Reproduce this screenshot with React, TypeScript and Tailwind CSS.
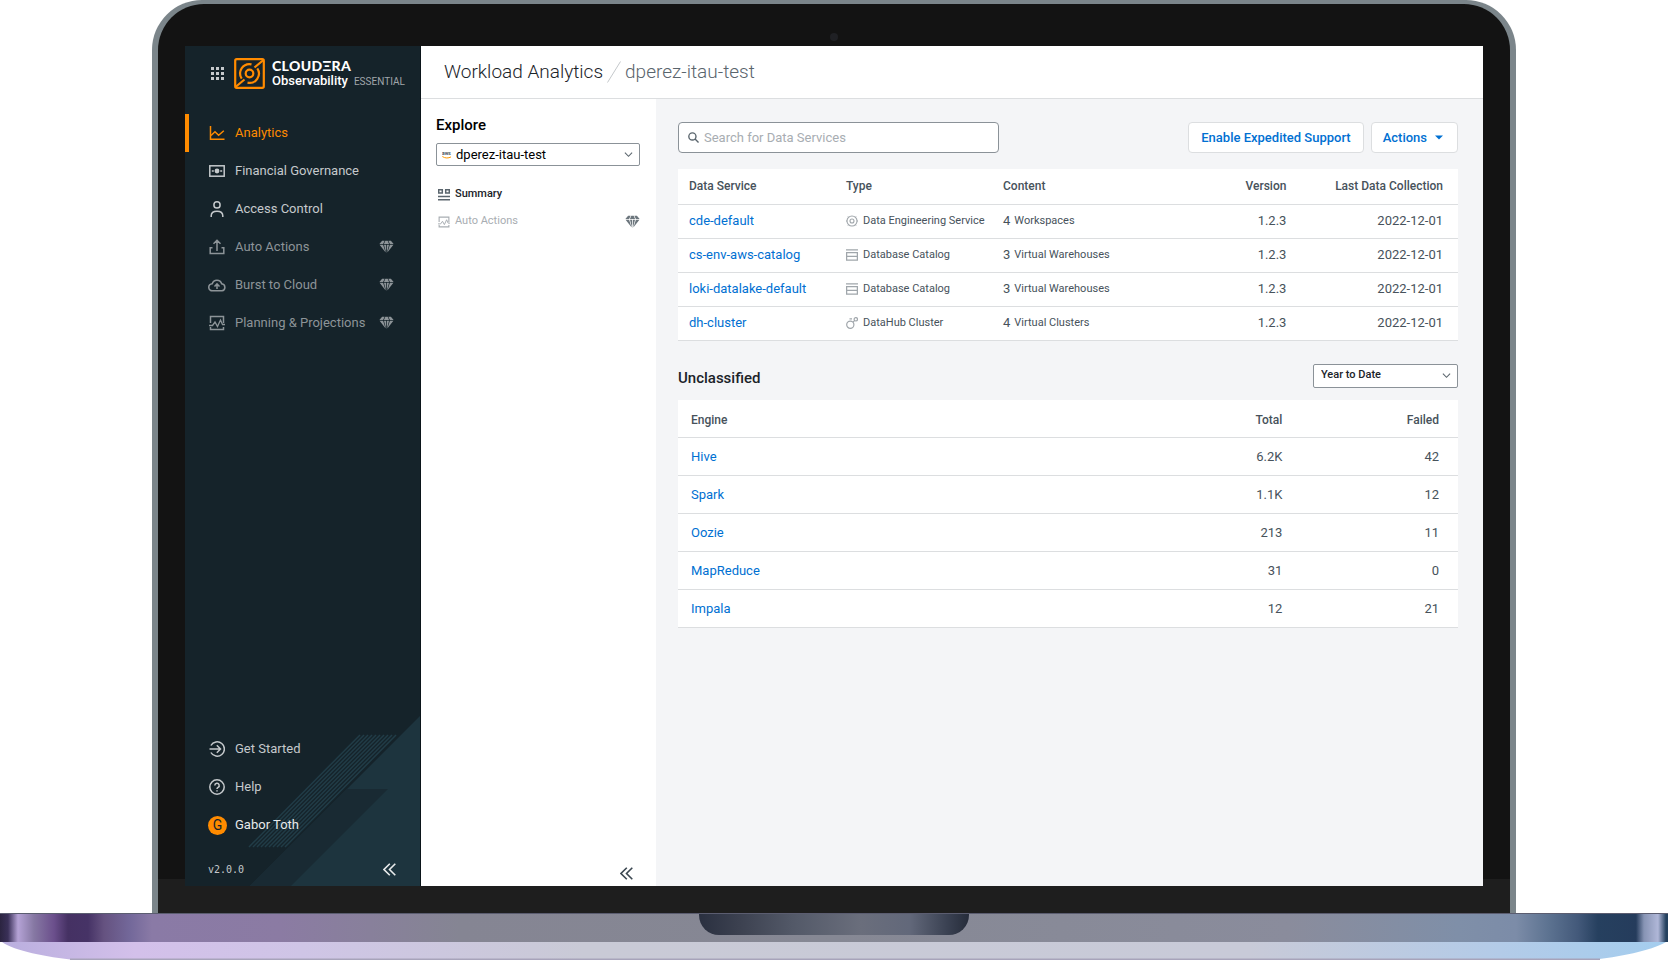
import React, { ReactNode } from 'react'

type IconProps = { className?: string }

const Svg = ({
  className = 'size-4',
  box = 16,
  children,
}: {
  className?: string
  box?: number
  children: ReactNode
}) => (
  <svg
    viewBox={`0 0 ${box} ${box}`}
    fill="none"
    stroke="currentColor"
    strokeWidth="1.5"
    className={`shrink-0 ${className}`}
    aria-hidden="true"
  >
    {children}
  </svg>
)

const GridIcon = () => (
  <Svg box={13} className="size-[13px]">
    {[0, 5, 10].map((y) =>
      [0, 5, 10].map((x) => (
        <rect key={`${x}-${y}`} x={x} y={y} width="3" height="3" fill="currentColor" stroke="none" />
      ))
    )}
  </Svg>
)

const LogoMark = () => (
  <svg
    viewBox="0 0 31 31"
    fill="none"
    stroke="#ff8b00"
    strokeWidth="2.2"
    className="size-[31px] shrink-0"
    aria-hidden="true"
  >
    <rect x="1.2" y="1.2" width="28.6" height="28.6" rx="1.5" />
    <circle cx="15.5" cy="15.5" r="3.8" />
    <path d="M29.5 2 20.500 9.500M1.500 29 10.500 21.500" />
    <path d="M17.500 6.300A9.400 9.400 0 0 0 7.700 20.700" />
    <path d="M13.500 24.700A9.400 9.400 0 0 0 23.300 10.300" />
  </svg>
)

const AnalyticsIcon = () => (
  <Svg>
    <path d="M1.5 1v13.3H15.500" />
    <path d="M2 10.500 6 6.800l3.600 3.400L14.800 5.800" />
  </Svg>
)

const FinanceIcon = () => (
  <Svg>
    <rect x=".8" y="2.800" width="14.400" height="10.400" />
    <circle cx="8" cy="8" r="2.400" fill="currentColor" stroke="none" />
    <path d="M2.800 8h2M11.200 8h2" />
  </Svg>
)

const UserIcon = () => (
  <Svg>
    <circle cx="8" cy="3.900" r="3.100" />
    <path d="M2.200 16v-1.200c0-2.800 2.300-4.600 5.800-4.600s5.800 1.800 5.800 4.600V16" />
  </Svg>
)

const UploadIcon = () => (
  <Svg>
    <path d="M8 12V1.500M4.500 4.800 8 1.300l3.500 3.500M3.500 8.700H1.200v5.800h13.600V8.700h-2.300" />
  </Svg>
)

const CloudIcon = () => (
  <Svg box={20} className="-mx-px size-[18px]">
    <path
      strokeWidth="1.700"
      d="M5 16.500a4 4 0 0 1-.3-8A5.500 5.500 0 0 1 15.200 8.600 4 4 0 0 1 15.500 16.500ZM10 14.500V9M7.200 11.600 10 8.800l2.800 2.800"
    />
  </Svg>
)

const ProjectionIcon = ({ className }: IconProps) => (
  <Svg className={className}>
    <path d="M1.500 8V1.500h13V8M1.500 12v2.500h13V12" />
    <path strokeWidth="1.300" d="M0 10.500h3.500L6 7l2.500 4.500L11.500 5l2 4.500H16" />
  </Svg>
)

const GemIcon = () => (
  <svg viewBox="0 0 16 14" className="h-[14px] w-[15px] shrink-0" fill="currentColor" aria-hidden="true">
    <path d="M3.300.3H6L4.400 3.900H.4ZM6.700.3h2.600l1.400 3.600H5.300ZM10 .3h2.700l2.900 3.600h-4ZM.6 4.700h3.800l2.500 7.800ZM5.300 4.700h2.300v8.800ZM8.400 4.700h2.300l-2.300 8.800ZM11.600 4.700h3.800l-6.300 7.800Z" />
  </svg>
)

const EnterIcon = () => (
  <Svg>
    <path d="M1.900 4.500A7.200 7.200 0 1 1 1.900 11.500M.5 8h10.800M7.800 4.300 11.500 8l-3.700 3.700" />
  </Svg>
)

const HelpIcon = () => (
  <Svg>
    <circle cx="8" cy="8" r="7.200" />
    <path d="M5.800 6.500a2.200 2.200 0 1 1 3.300 1.900C8.300 8.900 8 9.200 8 10M8 11.200v1.400" />
  </Svg>
)

const CollapseIcon = () => (
  <Svg box={13} className="size-[13px]">
    <path strokeWidth="1.600" d="M6.800.7 1 6.500l5.800 5.800M12.300.7 6.500 6.500l5.800 5.800" />
  </Svg>
)

const SummaryIcon = () => (
  <Svg box={12} className="size-3">
    <path d="M.7.700h3.600v3.300H.7ZM7.700.700h3.600v3.300H7.700ZM0 7.500h12M0 10.800h12" />
  </Svg>
)

const SearchIcon = () => (
  <Svg box={12} className="size-[11px]">
    <circle cx="4.800" cy="4.800" r="3.900" />
    <path d="m7.700 7.700 3.800 3.800" />
  </Svg>
)

const ChevronIcon = () => (
  <Svg box={10} className="size-[9px]">
    <path strokeWidth="1.200" d="m1 3 4 4 4-4" />
  </Svg>
)

const EngineeringIcon = () => (
  <Svg box={12} className="size-3">
    <circle cx="6" cy="6" r="5" strokeWidth="1.100" />
    <circle cx="6" cy="6" r="2" strokeWidth="1.100" />
    <path strokeWidth="1" d="M0 6h1M11 6h1M2 1.500l.6.800M10 1.500l-.6.800M2 10.500l.6-.8M10 10.500l-.6-.8" />
  </Svg>
)

const CatalogIcon = () => (
  <Svg box={12} className="size-3">
    <path strokeWidth="1.300" d="M0 .8h12M.6 3.600h10.800v7.600H.6ZM.6 7.400h10.800" />
  </Svg>
)

const ClusterIcon = () => (
  <Svg box={12} className="size-3">
    <circle cx="4.300" cy="7.700" r="3.600" strokeWidth="1.200" />
    <circle cx="9.800" cy="2.300" r="1.700" strokeWidth="1.200" />
    <path strokeWidth="1.200" d="m7 5.200 1.500-1.600M3.500 1.800h2.500" />
  </Svg>
)

const AwsIcon = () => (
  <svg viewBox="0 0 10 8" className="h-2 w-[10px]" aria-hidden="true">
    <text x="0" y="4" fontSize="5" fontWeight="700" fill="#4b5563">
      aws
    </text>
    <path d="M.3 5.500c2.800 1.900 6.200 1.900 8.700.4" fill="none" stroke="#ff9900" strokeWidth="1" />
  </svg>
)

const navItems = [
  { label: 'Analytics', icon: <AnalyticsIcon />, active: true },
  { label: 'Financial Governance', icon: <FinanceIcon /> },
  { label: 'Access Control', icon: <UserIcon /> },
  { label: 'Auto Actions', icon: <UploadIcon />, premium: true },
  { label: 'Burst to Cloud', icon: <CloudIcon />, premium: true },
  { label: 'Planning & Projections', icon: <ProjectionIcon />, premium: true },
]

const services = [
  { name: 'cde-default', icon: <EngineeringIcon />, type: 'Data Engineering Service', count: 4, unit: 'Workspaces' },
  { name: 'cs-env-aws-catalog', icon: <CatalogIcon />, type: 'Database Catalog', count: 3, unit: 'Virtual Warehouses' },
  { name: 'loki-datalake-default', icon: <CatalogIcon />, type: 'Database Catalog', count: 3, unit: 'Virtual Warehouses' },
  { name: 'dh-cluster', icon: <ClusterIcon />, type: 'DataHub Cluster', count: 4, unit: 'Virtual Clusters' },
]

const engines = [
  { name: 'Hive', total: '6.2K', failed: 42 },
  { name: 'Spark', total: '1.1K', failed: 12 },
  { name: 'Oozie', total: '213', failed: 11 },
  { name: 'MapReduce', total: '31', failed: 0 },
  { name: 'Impala', total: '12', failed: 21 },
]

const SidebarArt = () => (
  <svg viewBox="0 0 235 170" className="absolute right-0 bottom-0 h-[170px] w-[235px]" aria-hidden="true">
    <path d="M235 0v170H65Z" fill="#1d343e" />
    <path d="M162 73h41L106 170H65Z" fill="#192a33" />
    {[0, 1, 2, 3, 4, 5, 6, 7, 8, 9].map((i) => (
      <path key={i} d={`M${175 + i * 4} 19l-111 112`} stroke="#213c47" strokeWidth="1.500" />
    ))}
  </svg>
)

const Sidebar = () => (
  <aside className="relative flex w-[236px] shrink-0 flex-col border-r border-[#0b151a] bg-[#15232a] text-[13px] text-[#c5c9cc]">
    <SidebarArt />
    <div className="relative flex h-[68px] items-center pb-[13px] pl-[26px]">
      <button aria-label="Apps" className="mr-[10px]">
        <GridIcon />
      </button>
      <LogoMark />
      <div className="ml-[7px] text-white">
        <div className="font-[Lato] text-sm leading-[15px] font-black tracking-wide">CLOUDΞRA</div>
        <div className="flex items-baseline leading-4 font-medium">
          Observability
          <span className="ml-[6px] text-[10px] font-normal text-[#a0a6aa]">ESSENTIAL</span>
        </div>
      </div>
    </div>
    <nav className="relative">
      {navItems.map(({ label, icon, active, premium }) => (
        <a
          key={label}
          href="#"
          className={`flex h-[38px] items-center gap-[10px] border-l-4 pr-[26px] pl-5 ${
            active ? 'border-[#ff8b00] text-[#ff8b00]' : 'border-transparent'
          } ${premium ? 'text-[#8d9498]' : ''}`}
        >
          {icon}
          <span className="flex-1 whitespace-nowrap">{label}</span>
          {premium && <GemIcon />}
        </a>
      ))}
    </nav>
    <nav className="relative mt-auto">
      <a href="#" className="flex h-[38px] items-center gap-[10px] pl-6">
        <EnterIcon />
        Get Started
      </a>
      <a href="#" className="flex h-[38px] items-center gap-[10px] pl-6">
        <HelpIcon />
        Help
      </a>
      <a href="#" className="flex h-[38px] items-center gap-2 pl-[23px] text-[#e8eaeb]">
        <span className="flex size-[19px] items-center justify-center rounded-full bg-[#ff8b00] text-sm text-[#15232a]">
          G
        </span>
        Gabor Toth
      </a>
    </nav>
    <div className="relative flex h-[42px] items-center justify-between pt-2 pr-6 pl-[23px]">
      <span className="font-['DejaVu_Sans_Mono',monospace] text-[10px]">v2.0.0</span>
      <button aria-label="Collapse sidebar" className="text-[#e8eaeb]">
        <CollapseIcon />
      </button>
    </div>
  </aside>
)

const ExplorePanel = () => (
  <section className="flex w-[235px] shrink-0 flex-col bg-white pt-4 pr-4 pb-[6px] pl-[15px] text-black">
    <label htmlFor="environment" className="text-[15px] leading-5 font-medium">
      Explore
    </label>
    <div className="relative mt-2 flex items-center">
      <span className="pointer-events-none absolute left-[6px]">
        <AwsIcon />
      </span>
      <select
        id="environment"
        className="h-[23px] w-full appearance-none rounded-xs border border-[#8b9298] bg-white pl-[19px] text-[13px]"
      >
        <option>dperez-itau-test</option>
      </select>
      <span className="pointer-events-none absolute right-[7px] text-[#5a656d]">
        <ChevronIcon />
      </span>
    </div>
    <a href="#" className="mt-[15px] flex h-[27px] items-center gap-[5px] pl-[2px] text-[11px] font-medium text-[#1b2329]">
      <span className="text-[#5a656d]">
        <SummaryIcon />
      </span>
      Summary
    </a>
    <a href="#" className="flex h-[27px] items-center gap-[5px] pl-[2px] text-[11px] text-[#a8adb2]">
      <ProjectionIcon className="size-3" />
      <span className="flex-1">Auto Actions</span>
      <span className="text-[#6c767d]">
        <GemIcon />
      </span>
    </a>
    <button aria-label="Collapse panel" className="mt-auto mr-[7px] self-end text-[#3c4852]">
      <CollapseIcon />
    </button>
  </section>
)

const ServicesTable = () => (
  <table className="w-full table-fixed bg-white text-left text-[#47525b]">
    <thead>
      <tr className="h-[35px] border-b border-[#dcdee0] text-xs">
        <th className="w-[20%] pl-[11px] font-medium">Data Service</th>
        <th className="w-[20%] pl-3 font-medium">Type</th>
        <th className="w-[22%] pl-[13px] font-medium">Content</th>
        <th className="text-right font-medium">Version</th>
        <th className="w-[22%] pr-[15px] text-right font-medium">Last Data Collection</th>
      </tr>
    </thead>
    <tbody>
      {services.map(({ name, icon, type, count, unit }) => (
        <tr key={name} className="h-[34px] border-b border-[#dcdee0] text-[13px]">
          <td className="pl-[11px]">
            <a href="#" className="text-[#0070d2]">
              {name}
            </a>
          </td>
          <td className="pl-3">
            <span className="flex items-center gap-[5px] text-[11px] whitespace-nowrap">
              <span className="text-[#a0a6ab]">{icon}</span>
              {type}
            </span>
          </td>
          <td className="pl-[13px]">
            <span className="flex items-center gap-1">
              {count}
              <span className="text-[11px]">{unit}</span>
            </span>
          </td>
          <td className="text-right">1.2.3</td>
          <td className="pr-[15px] text-right">2022-12-01</td>
        </tr>
      ))}
    </tbody>
  </table>
)

const EnginesTable = () => (
  <table className="w-full table-fixed bg-white text-left text-[13px] text-[#47525b]">
    <thead>
      <tr className="h-[38px] border-b border-[#dcdee0] text-xs">
        <th className="pt-1 pl-[13px] font-medium">Engine</th>
        <th className="pt-1 pr-1 text-right font-medium">Total</th>
        <th className="w-[22%] pt-1 pr-[19px] text-right font-medium">Failed</th>
      </tr>
    </thead>
    <tbody>
      {engines.map(({ name, total, failed }) => (
        <tr key={name} className="h-[38px] border-b border-[#dcdee0]">
          <td className="pl-[13px]">
            <a href="#" className="text-[#0070d2]">
              {name}
            </a>
          </td>
          <td className="pr-1 text-right">{total}</td>
          <td className="pr-[19px] text-right">{failed}</td>
        </tr>
      ))}
    </tbody>
  </table>
)

const Content = () => (
  <section className="min-w-0 flex-1 bg-[#f4f5f7] pt-[23px] pr-[25px] pl-[22px]">
    <div className="flex items-center justify-between gap-4">
      <label className="flex h-[31px] w-[321px] items-center gap-[5px] rounded-sm border border-[#8b9298] bg-white px-[9px] text-[#5a656d]">
        <SearchIcon />
        <input
          type="search"
          aria-label="Search for Data Services"
          placeholder="Search for Data Services"
          className="w-full text-[13px] outline-none placeholder:text-[#a8adb2]"
        />
      </label>
      <div className="flex gap-[7px] text-[13px] font-medium text-[#0070d2]">
        <button className="h-[31px] rounded-sm border border-[#dcdee0] bg-white px-3">
          Enable Expedited Support
        </button>
        <button className="flex h-[31px] items-center gap-2 rounded-sm border border-[#dcdee0] bg-white pr-[14px] pl-[11px]">
          Actions
          <svg viewBox="0 0 8 5" className="h-[5px] w-2" fill="currentColor" aria-hidden="true">
            <path d="M0 .5h8L4 4.500Z" />
          </svg>
        </button>
      </div>
    </div>
    <div className="mt-4">
      <ServicesTable />
    </div>
    <div className="mt-[23px] mb-3 flex items-center justify-between">
      <h2 className="pt-1 text-[15px] leading-5 font-medium text-[#1b2329]">Unclassified</h2>
      <div className="relative flex items-center">
        <select
          aria-label="Period"
          className="h-6 w-[145px] appearance-none rounded-xs border border-[#8b9298] bg-white pl-[7px] text-[11px] font-medium text-[#1b2329]"
        >
          <option>Year to Date</option>
        </select>
        <span className="pointer-events-none absolute right-[7px] text-[#5a656d]">
          <ChevronIcon />
        </span>
      </div>
    </div>
    <EnginesTable />
  </section>
)

const LaptopBase = () => (
  <div className="relative">
    <div className="h-[29px] border-t border-[#5b5d70] bg-[linear-gradient(90deg,#2b2440_0px,#3a3058_8px,#b5a3d6_18px,#8678a3_34px,#6b4f8c_54px,#453163_68px,#463366_88px,#655280_104px,#73689a_130px,#8a7aa6_152px,#8b7ba3_280px,#858593_460px,#868894_50%,#8a8c9c_calc(100%-380px),#7f8fa8_calc(100%-210px),#7c8ca8_calc(100%-152px),#5d7391_calc(100%-120px),#43597a_calc(100%-90px),#26405f_calc(100%-70px),#253c5c_calc(100%-32px),#8794b4_calc(100%-24px),#b0b7d8_calc(100%-10px),#23405e_calc(100%-2px))]" />
    <svg viewBox="0 0 1668 18" preserveAspectRatio="none" className="block h-[18px] w-full" aria-hidden="true">
      <defs>
        <linearGradient id="front">
          <stop offset="0" stopColor="#b9aede" />
          <stop offset=".08" stopColor="#d3c0ea" />
          <stop offset=".18" stopColor="#cfc5e6" />
          <stop offset=".35" stopColor="#c9cad6" />
          <stop offset=".75" stopColor="#c8cad8" />
          <stop offset=".9" stopColor="#b3cbe8" />
          <stop offset="1" stopColor="#a4cdee" />
        </linearGradient>
      </defs>
      <path d="M2 0H1666C1650 9 1620 15 1590 18H76C45 15 15 9 2 0Z" fill="url(#front)" />
      <path d="M70 17.300H1600" stroke="#a7a3ba" strokeWidth="1.400" />
    </svg>
    <div className="absolute inset-x-0 top-px mx-auto h-[21px] w-[270px] rounded-b-[20px] bg-[linear-gradient(90deg,#2a3040,#3c4150_15%,#535968_35%,#6a6e7c_60%,#62687a_78%,#3a4152_92%,#262c3a)]" />
  </div>
)

export default function App() {
  return (
    <div className="flex min-h-screen flex-col bg-white pb-[13px] font-[Roboto,sans-serif]">
      <div className="mx-[152px] flex flex-1 flex-col rounded-t-[50px] bg-[#7b858a] px-[6px] pt-1">
        <div className="flex flex-1 flex-col rounded-t-[46px] bg-[linear-gradient(0deg,#1e1e1e_34px,#131313_34px)] px-[27px] pb-[27px]">
          <div className="flex h-[42px] items-center justify-center pt-6">
            <span className="size-2 rounded-full bg-[#1f2024]" />
          </div>
          <div className="flex flex-1">
            <Sidebar />
            <main className="flex min-w-0 flex-1 flex-col">
              <header className="flex h-[53px] items-center border-b border-[#dcdee0] bg-white pl-[23px] text-[19px] font-light text-[#1b2329]">
                <h1>Workload Analytics</h1>
                <svg viewBox="0 0 14 22" className="mx-1 h-[22px] w-[14px]" aria-hidden="true">
                  <path d="M.5 21.500 13.500.5" stroke="#c4c8cb" />
                </svg>
                <span className="text-[#5a656d]">dperez-itau-test</span>
              </header>
              <div className="flex flex-1">
                <ExplorePanel />
                <Content />
              </div>
            </main>
          </div>
        </div>
      </div>
      <LaptopBase />
    </div>
  )
}
